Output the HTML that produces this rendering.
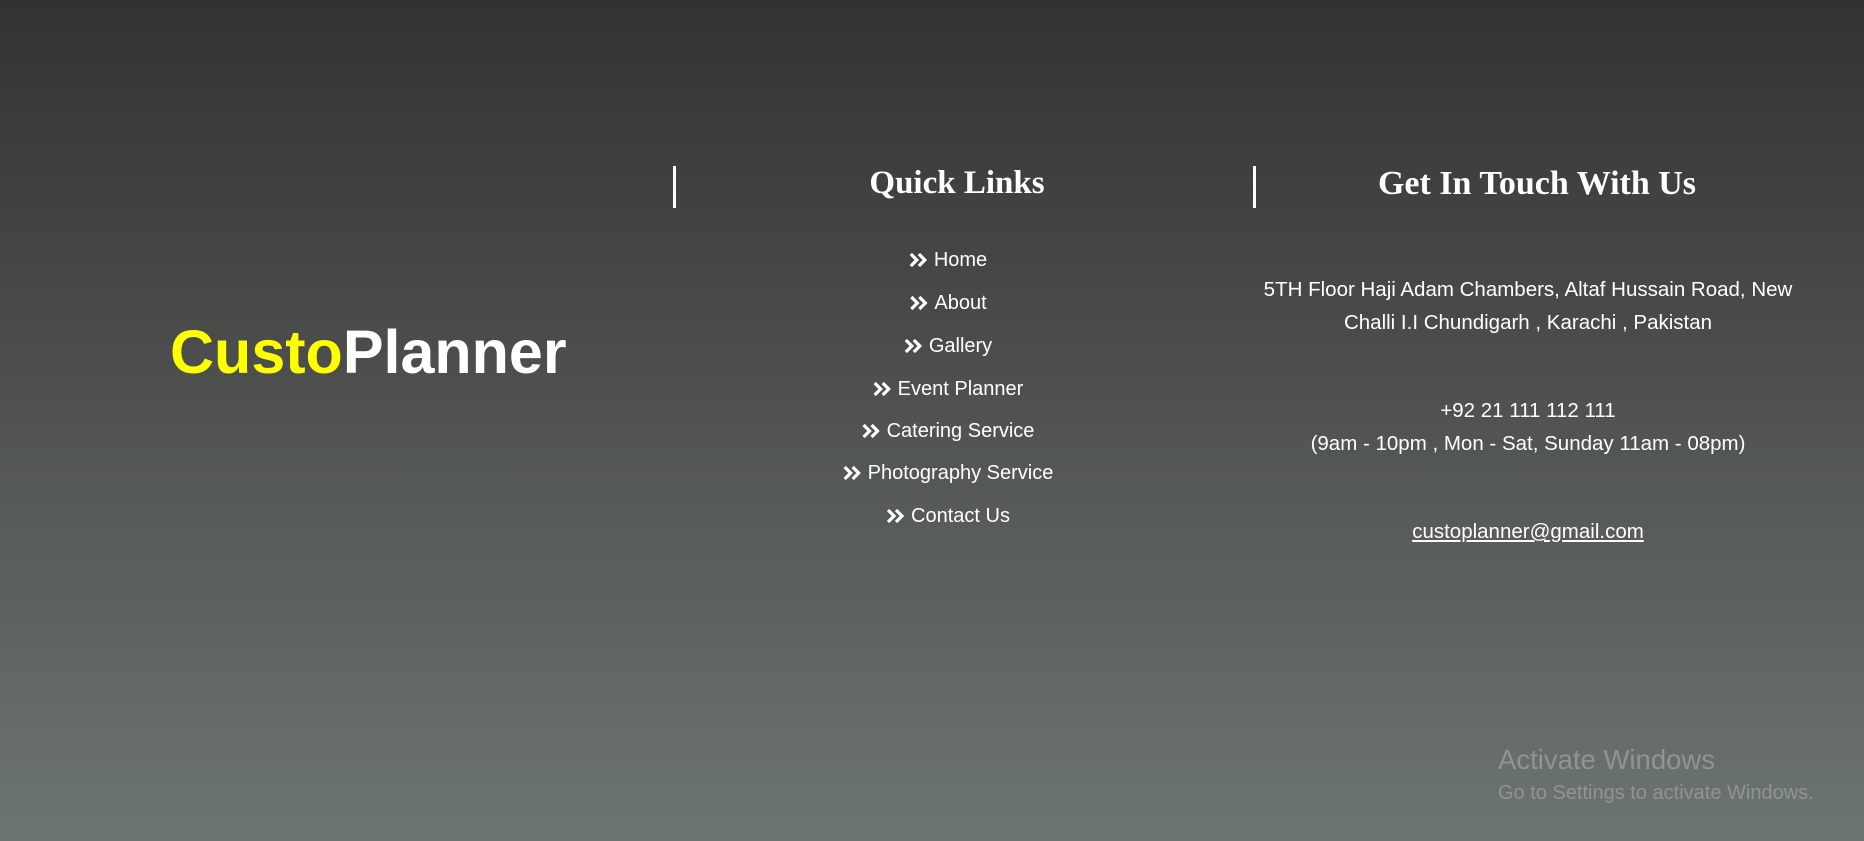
<!DOCTYPE html>
<html><head><meta charset="utf-8"><style>
html,body{margin:0;padding:0;}
body{width:1864px;height:841px;overflow:hidden;position:relative;background:linear-gradient(to bottom,#323232 0%,#4a4c4b 40%,#6d7571 100%);font-family:"Liberation Sans",sans-serif;color:#fff;}
.a{position:absolute;white-space:nowrap;line-height:1;}
.c{transform:translateX(-50%);}
.bar{position:absolute;width:3px;height:42px;background:#fff;top:166px;}
.h{font-family:"Liberation Serif",serif;font-weight:bold;font-size:33px;}
.l{font-size:20px;display:flex;align-items:center;}
.l svg{margin-right:7px;}
.t{font-size:20.5px;}
</style></head><body>
<div class="a" style="left:170px;top:322px;font-size:61px;font-weight:bold;"><span style="color:#ffff00">Custo</span>Planner</div>
<div class="bar" style="left:673px"></div>
<div class="bar" style="left:1253px"></div>
<div class="a c h" style="left:957px;top:167px;">Quick Links</div>
<div class="a c h" style="left:1537px;top:167px;font-size:34px;">Get In Touch With Us</div>

<div class="a c l" style="left:948px;top:250px;"><svg width="18" height="14" viewBox="0 0 18 14"><path d="M2 1l6 6-6 6M10 1l6 6-6 6" fill="none" stroke="#fff" stroke-width="3.2"/></svg>Home</div>
<div class="a c l" style="left:948px;top:293px;"><svg width="18" height="14" viewBox="0 0 18 14"><path d="M2 1l6 6-6 6M10 1l6 6-6 6" fill="none" stroke="#fff" stroke-width="3.2"/></svg>About</div>
<div class="a c l" style="left:948px;top:336px;"><svg width="18" height="14" viewBox="0 0 18 14"><path d="M2 1l6 6-6 6M10 1l6 6-6 6" fill="none" stroke="#fff" stroke-width="3.2"/></svg>Gallery</div>
<div class="a c l" style="left:948px;top:379px;"><svg width="18" height="14" viewBox="0 0 18 14"><path d="M2 1l6 6-6 6M10 1l6 6-6 6" fill="none" stroke="#fff" stroke-width="3.2"/></svg>Event Planner</div>
<div class="a c l" style="left:948px;top:421px;"><svg width="18" height="14" viewBox="0 0 18 14"><path d="M2 1l6 6-6 6M10 1l6 6-6 6" fill="none" stroke="#fff" stroke-width="3.2"/></svg>Catering Service</div>
<div class="a c l" style="left:948px;top:463px;"><svg width="18" height="14" viewBox="0 0 18 14"><path d="M2 1l6 6-6 6M10 1l6 6-6 6" fill="none" stroke="#fff" stroke-width="3.2"/></svg>Photography Service</div>
<div class="a c l" style="left:948px;top:506px;"><svg width="18" height="14" viewBox="0 0 18 14"><path d="M2 1l6 6-6 6M10 1l6 6-6 6" fill="none" stroke="#fff" stroke-width="3.2"/></svg>Contact Us</div>

<div class="a c t" style="left:1528px;top:280px;">5TH Floor Haji Adam Chambers, Altaf Hussain Road, New</div>
<div class="a c t" style="left:1528px;top:313px;">Challi I.I Chundigarh , Karachi , Pakistan</div>
<div class="a c t" style="left:1528px;top:401px;">+92 21 111 112 111</div>
<div class="a c t" style="left:1528px;top:434px;">(9am - 10pm , Mon - Sat, Sunday 11am - 08pm)</div>
<div class="a c t" style="left:1528px;top:522px;text-decoration:underline;">custoplanner@gmail.com</div>

<div class="a" style="left:1498px;top:746px;font-size:27.5px;color:#8f9592;">Activate Windows</div>
<div class="a" style="left:1498px;top:783px;font-size:20px;color:#8f9592;">Go to Settings to activate Windows.</div>
</body></html>
